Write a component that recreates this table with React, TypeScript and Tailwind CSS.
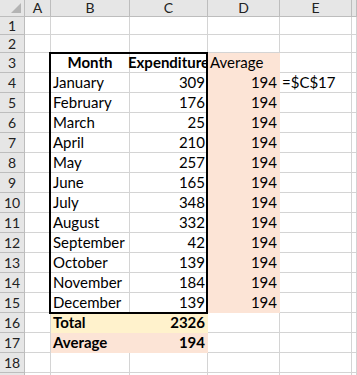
import React from 'react';

type Cell = {
  text?: string;
  align?: 'left' | 'right' | 'center';
  bold?: boolean;
  fill?: string;
};

const months: [string, number][] = [
  ['January', 309],
  ['February', 176],
  ['March', 25],
  ['April', 210],
  ['May', 257],
  ['June', 165],
  ['July', 348],
  ['August', 332],
  ['September', 42],
  ['October', 139],
  ['November', 184],
  ['December', 139],
];

const peach = 'bg-[#fce4d6]';
const gold = 'bg-[#fff2cc]';

const empty = (): Cell[] => [{}, {}, {}, {}, {}, {}];

// rows 1..19, each row has cells for A..F
const buildRows = (): Cell[][] => {
  const rows: Cell[][] = [empty(), empty()];
  rows.push([
    {},
    { text: 'Month', bold: true, align: 'center' },
    { text: 'Expenditure', bold: true, align: 'center' },
    { text: 'Average', fill: peach },
    {},
    {},
  ]);
  months.forEach(([m, v], i) => {
    rows.push([
      {},
      { text: m },
      { text: String(v), align: 'right' },
      { text: '194', align: 'right', fill: peach },
      i === 0 ? { text: '=$C$17' } : {},
      {},
    ]);
  });
  rows.push([
    {},
    { text: 'Total', bold: true, fill: gold },
    { text: '2326', bold: true, align: 'right', fill: gold },
    {},
    {},
    {},
  ]);
  rows.push([
    {},
    { text: 'Average', bold: true, fill: peach },
    { text: '194', bold: true, align: 'right', fill: peach },
    {},
    {},
    {},
  ]);
  rows.push(empty());
  rows.push(empty());
  return rows;
};

export default function App() {
  const rows = buildRows();
  return (
    <div
      className="w-[357px] h-[375px] overflow-hidden bg-white text-[15px] text-black"
      style={{ fontFamily: 'Lato, "Open Sans", sans-serif' }}
    >
      <div className="relative grid grid-cols-[25px_26px_79px_78px_72px_72px_1fr]">
        {/* column headers */}
        <div className="h-[17px] bg-[#e6e6e6] border-r border-b border-[#bdbdbd] relative">
          <svg className="absolute right-[3px] bottom-[3px]" width="10" height="10" viewBox="0 0 10 10">
            <polygon points="10,0 10,10 0,10" fill="#b4b4b4" />
          </svg>
        </div>
        {['A', 'B', 'C', 'D', 'E', ''].map((c, i) => (
          <div
            key={i}
            className="h-[17px] bg-[#e6e6e6] border-r border-b border-[#bdbdbd] flex items-center justify-center text-[14px] text-[#222] leading-none"
          >
            {c}
          </div>
        ))}

        {rows.map((row, r) => {
          const h = r < 2 ? 'h-[18px]' : 'h-[20px]';
          return (
            <React.Fragment key={r}>
              <div
                className={`${h} bg-[#e6e6e6] border-r border-b border-[#bdbdbd] flex items-center justify-center text-[14px] text-[#222] leading-none`}
              >
                {r < 18 ? r + 1 : ''}
              </div>
              {row.map((cell, c) => (
                <div
                  key={c}
                  className={`${h} ${cell.fill ?? 'bg-white'} border-r border-b ${
                    cell.fill ? 'border-transparent' : 'border-[#d4d4d4]'
                  } flex items-end pb-[1px] px-[2px] leading-[17px] whitespace-nowrap overflow-visible ${
                    cell.align === 'right'
                      ? 'justify-end'
                      : cell.align === 'center'
                      ? 'justify-center'
                      : 'justify-start'
                  } ${cell.bold ? 'font-bold' : ''}`}
                >
                  {cell.text}
                </div>
              ))}
            </React.Fragment>
          );
        })}

        {/* thick outline around B3:C15 */}
        <div className="absolute left-[49px] top-[52px] w-[159px] h-[262px] border-2 border-black pointer-events-none" />
      </div>
    </div>
  );
}
